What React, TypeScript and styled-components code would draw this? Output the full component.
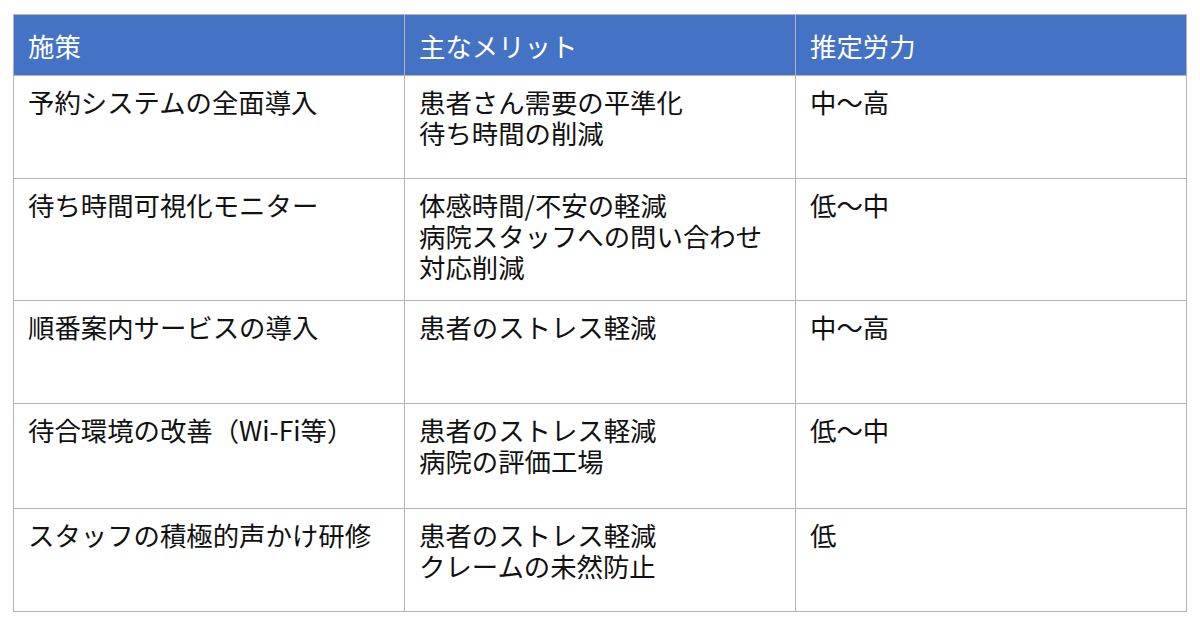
import React from 'react';
import styled, { createGlobalStyle } from 'styled-components';

const GlobalStyle = createGlobalStyle`
  html, body {
    margin: 0;
    padding: 0;
    background: #ffffff;
  }
  body {
    font-family: "Noto Sans CJK JP", "Noto Sans", sans-serif;
    color: #111111;
  }
`;

const Page = styled.div`
  padding: 14px 13px;
`;

const Table = styled.table`
  width: 1174px;
  border-collapse: collapse;
  table-layout: fixed;
  font-size: 26.4px;
  line-height: 31px;
`;

const HeadCell = styled.th`
  height: 60px;
  padding: 0 14px;
  background: #4472c4;
  color: #ffffff;
  font-weight: 400;
  text-align: left;
  vertical-align: middle;
  border: 1px solid #b4b4b4;
`;

const Row = styled.tr<{ $h: number }>`
  height: ${p => p.$h}px;
`;

const Cell = styled.td`
  padding: 10px 14px;
  vertical-align: top;
  border: 1px solid #b4b4b4;
  color: #111111;
`;

const Line = styled.div`
  white-space: nowrap;
`;

const rows: { h: number; measure: string; merits: string[]; effort: string }[] = [
  { h: 103, measure: '予約システムの全面導入', merits: ['患者さん需要の平準化', '待ち時間の削減'], effort: '中〜高' },
  { h: 122, measure: '待ち時間可視化モニター', merits: ['体感時間/不安の軽減', '病院スタッフへの問い合わせ', '対応削減'], effort: '低〜中' },
  { h: 103, measure: '順番案内サービスの導入', merits: ['患者のストレス軽減'], effort: '中〜高' },
  { h: 105, measure: '待合環境の改善（Wi-Fi等）', merits: ['患者のストレス軽減', '病院の評価工場'], effort: '低〜中' },
  { h: 103, measure: 'スタッフの積極的声かけ研修', merits: ['患者のストレス軽減', 'クレームの未然防止'], effort: '低' },
];

export default function App() {
  return (
    <Page>
      <GlobalStyle />
      <Table>
        <thead>
          <tr>
            <HeadCell>施策</HeadCell>
            <HeadCell>主なメリット</HeadCell>
            <HeadCell>推定労力</HeadCell>
          </tr>
        </thead>
        <tbody>
          {rows.map(r => (
            <Row key={r.measure} $h={r.h}>
              <Cell>{r.measure}</Cell>
              <Cell>
                {r.merits.map(m => (
                  <Line key={m}>{m}</Line>
                ))}
              </Cell>
              <Cell>{r.effort}</Cell>
            </Row>
          ))}
        </tbody>
      </Table>
    </Page>
  );
}
